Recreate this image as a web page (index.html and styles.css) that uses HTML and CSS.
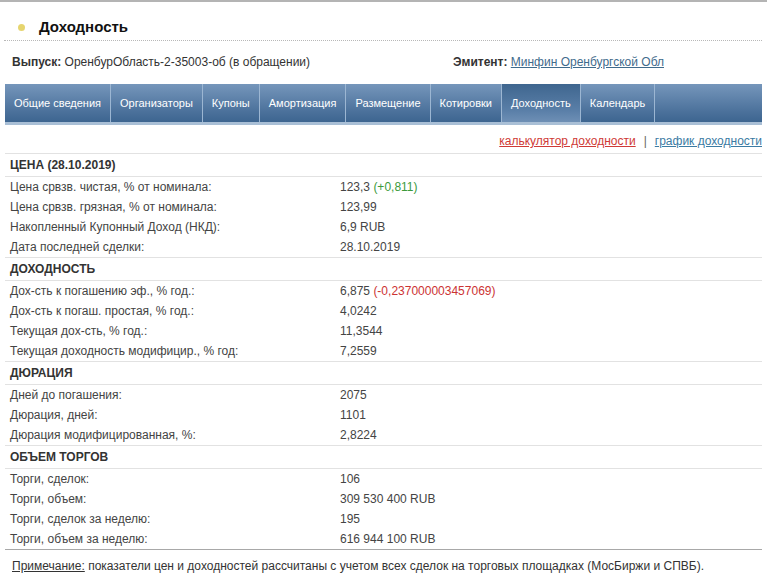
FILE: index.html
```html
<!DOCTYPE html>
<html lang="ru">
    <head>
        <meta charset="UTF-8">
        <title>Доходность</title>
        <link rel="stylesheet" href="styles.css">
    </head>
    <body>
    <div id="id-div-page">
        <div class="page-title">
            <span class="title-dot"></span>
            <h1>Доходность</h1>
        </div>
        <div class="issue-info">
            <div class="issue-item"><b>Выпуск:</b> ОренбурОбласть-2-35003-об (в обращении)</div>
            <div class="issue-item emitent"><b>Эмитент:</b> <a href="#">Минфин Оренбургской Обл</a></div>
        </div>
        <ul class="tabs">
            <li><a href="#">Общие сведения</a></li>
            <li><a href="#">Организаторы</a></li>
            <li><a href="#">Купоны</a></li>
            <li><a href="#">Амортизация</a></li>
            <li><a href="#">Размещение</a></li>
            <li><a href="#">Котировки</a></li>
            <li class="active"><a href="#">Доходность</a></li>
            <li><a href="#">Календарь</a></li>
        </ul>
        <div class="sub-links">
            <a href="#" class="link-red">калькулятор доходности</a>
            <span class="sep">|</span>
            <a href="#" class="link-blue">график доходности</a>
        </div>
        <div class="data-table">
            <div class="section">
                <div class="section-head">ЦЕНА (28.10.2019)</div>
                <div class="row"><span>Цена срвзв. чистая, % от номинала:</span><span>123,3 <em class="up">(+0,811)</em></span></div>
                <div class="row"><span>Цена срвзв. грязная, % от номинала:</span><span>123,99</span></div>
                <div class="row"><span>Накопленный Купонный Доход (НКД):</span><span>6,9 RUB</span></div>
                <div class="row"><span>Дата последней сделки:</span><span>28.10.2019</span></div>
            </div>
            <div class="section">
                <div class="section-head">ДОХОДНОСТЬ</div>
                <div class="row"><span>Дох-сть к погашению эф., % год.:</span><span>6,875 <em class="down">(-0,237000003457069)</em></span></div>
                <div class="row"><span>Дох-сть к погаш. простая, % год.:</span><span>4,0242</span></div>
                <div class="row"><span>Текущая дох-сть, % год.:</span><span>11,3544</span></div>
                <div class="row"><span>Текущая доходность модифицир., % год:</span><span>7,2559</span></div>
            </div>
            <div class="section">
                <div class="section-head">ДЮРАЦИЯ</div>
                <div class="row"><span>Дней до погашения:</span><span>2075</span></div>
                <div class="row"><span>Дюрация, дней:</span><span>1101</span></div>
                <div class="row"><span>Дюрация модифицированная, %:</span><span>2,8224</span></div>
            </div>
            <div class="section last">
                <div class="section-head">ОБЪЕМ ТОРГОВ</div>
                <div class="row"><span>Торги, сделок:</span><span>106</span></div>
                <div class="row"><span>Торги, объем:</span><span>309 530 400 RUB</span></div>
                <div class="row"><span>Торги, сделок за неделю:</span><span>195</span></div>
                <div class="row"><span>Торги, объем за неделю:</span><span>616 944 100 RUB</span></div>
            </div>
        </div>
        <p class="note"><u>Примечание:</u> показатели цен и доходностей рассчитаны с учетом всех сделок на торговых площадках (МосБиржи и СПВБ).</p>
    </div>
    </body>
</html>
```

FILE: styles.css
```css
body {
    margin: 0;
    background: #fff;
    font: 12px "Liberation Sans", Arial, sans-serif;
    color: #333;
}
#id-div-page {
    width: 767px;
    border-top: 2px solid #b4b4b4;
}
.page-title {
    display: flex;
    align-items: center;
    margin: 0 5px 0 4px;
    padding: 15px 0 3px;
    border-bottom: 1px dotted #b8b8b8;
}
.title-dot {
    width: 7px;
    height: 7px;
    margin: 0 14px 0 14px;
    border-radius: 50%;
    background: #e6d56f;
}
.page-title h1 {
    margin: 0;
    font-size: 15px;
    line-height: 20px;
    color: #111;
}
.issue-info {
    display: flex;
    padding: 13px 0 14px 12px;
    line-height: 16px;
    color: #333;
}
.issue-item b {
    color: #333;
}
.emitent {
    margin-left: auto;
    margin-right: 103px;
}
.emitent a {
    color: #3f6b8c;
}
.tabs {
    display: flex;
    margin: 0 5px;
    padding: 0;
    list-style: none;
    height: 38px;
    border-bottom: 3px solid #a9bfd6;
    background: linear-gradient(#7596bb, #4a709a 75%, #3d6590);
}
.tabs li {
    border-right: 1px solid #9cb6d2;
}
.tabs li a {
    display: block;
    padding: 0 9px;
    font-size: 11px;
    line-height: 38px;
    color: #fff;
    text-decoration: none;
}
.tabs li.active {
    background: linear-gradient(#3f668f, #5a7fa8 70%, #6e8fb5);
}
.sub-links {
    display: flex;
    justify-content: flex-end;
    gap: 8px;
    margin: 0 5px;
    padding: 8px 0 4px;
    line-height: 16px;
}
.link-red {
    color: #cf3a36;
}
.link-blue {
    color: #3b7ba3;
}
.sep {
    color: #666;
}
.data-table {
    margin: 0 5px;
    border-top: 1px solid #e2e2e2;
}
.section {
    border-bottom: 1px solid #e2e2e2;
}
.section.last {
    border-bottom-color: #a8a8a8;
}
.section-head {
    height: 22px;
    line-height: 22px;
    padding-left: 5px;
    font-weight: bold;
    color: #333;
    border-bottom: 1px solid #e2e2e2;
}
.row {
    display: grid;
    grid-template-columns: 330px 1fr;
    height: 20px;
    line-height: 20px;
    padding-left: 5px;
    color: #444;
}
.row em {
    font-style: normal;
}
.row .up {
    color: #3c9a3c;
}
.row .down {
    color: #cc3333;
}
.note {
    margin: 0;
    padding: 8px 12px;
    line-height: 16px;
    color: #333;
}
```
